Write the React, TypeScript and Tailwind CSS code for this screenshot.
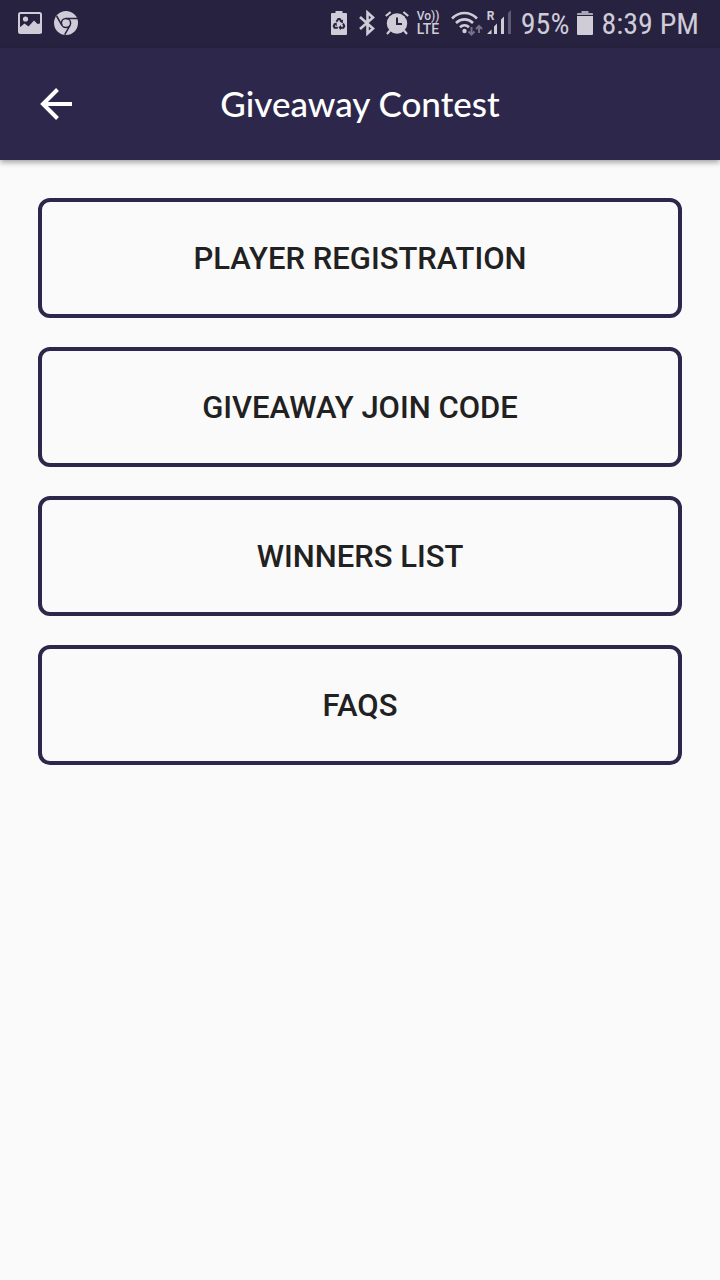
const menuItems = ["Player Registration", "Giveaway Join Code", "Winners List", "FAQs"];

function PictureIcon() {
    return (
        <svg width="24" height="22" viewBox="0 0 24 22" aria-hidden="true">
            <rect x="1" y="1" width="22" height="20" rx="1.5" fill="none" stroke="currentColor" strokeWidth="2" />
            <path d="M1 16l5.500-4.500 4 3 5.500-6 3.500 3.500 4.500-1v10H1z" fill="currentColor" />
            <circle cx="7.5" cy="7" r="2.6" fill="currentColor" />
        </svg>
    );
}

function ChromeIcon() {
    return (
        <svg width="24" height="24" viewBox="0 0 24 24" aria-hidden="true">
            <circle cx="12" cy="12" r="12" fill="currentColor" />
            <g fill="none" stroke="#282241" strokeWidth="1.5">
                <circle cx="12" cy="12" r="4.6" />
                <path d="M12 7.4h11M8 14.3L2.6 5M16 14.3L10.7 23.6" />
            </g>
        </svg>
    );
}

function BatteryRecycleIcon() {
    return (
        <svg width="16" height="24" viewBox="0 0 16 24" aria-hidden="true">
            <path d="M1 2h3.5V0h7v2H15a1 1 0 0 1 1 1v20a1 1 0 0 1-1 1H1a1 1 0 0 1-1-1V3a1 1 0 0 1 1-1z" fill="currentColor" />
            <g fill="none" stroke="#282241" strokeWidth="2">
                <path d="M5.4 10.8L7.3 7.9h1.4l1.6 2.5M12 12.6l1.3 2.4-.9 1.7H9.5M6.8 16.7H3.6L2.7 15l1.4-2.4" />
            </g>
            <path d="M11.9 8.6v3.7l-3.3-1.5zM10 14v5.2l-2.6-2.6zM2.3 13l3.3-1.6.3 3.5z" fill="#282241" />
        </svg>
    );
}

function BluetoothIcon() {
    return (
        <svg width="16" height="26" viewBox="0 0 16 26" fill="none" stroke="currentColor" strokeWidth="2.6" aria-hidden="true">
            <path d="M1 7l13 11.5-5.500 5V2.500l5.500 5L1 19" />
        </svg>
    );
}

function AlarmIcon() {
    return (
        <svg width="24" height="24" viewBox="0 0 24 24" aria-hidden="true">
            <circle cx="12" cy="12.5" r="10.2" fill="currentColor" />
            <g fill="none" stroke="currentColor" strokeWidth="2.2">
                <path d="M.8 5L5.6 1M23.2 5L18.4 1M5 19.5L2 23M19 19.5L22 23" />
            </g>
            <path d="M12 6.5V13h5" fill="none" stroke="#282241" strokeWidth="2" />
        </svg>
    );
}

function WifiIcon() {
    return (
        <svg width="32" height="25" viewBox="0 0 32 25" fill="none" aria-hidden="true">
            <g stroke="currentColor" strokeWidth="2.6">
                <path d="M1 7.5C8.5 .2 18.500.2 26 7.5" />
                <path d="M5 12C10 7.100 17 7.100 22 12" />
                <path d="M9 16.300C11.700 13.700 15.300 13.700 18 16.300" />
            </g>
            <circle cx="13.5" cy="20" r="2.2" fill="currentColor" />
            <g stroke="#777188" strokeWidth="2">
                <path d="M20.500 16v7.500M17.500 20.500l3 3 3-3M28 22v-7M25 18l3-3 3 3" />
            </g>
        </svg>
    );
}

function SignalIcon() {
    return (
        <div className="relative h-[26px] w-6">
            <svg width="24" height="26" viewBox="0 0 24 26" aria-hidden="true">
                <path d="M0 24l4.500-4.500V24zM7 16.500l3-3V24H7zM14 9.500l3-3V24h-3z" fill="currentColor" />
                <path d="M21 3l3-3v24h-3z" fill="#615a75" />
            </svg>
            <span className="absolute top-0 left-0 font-[Roboto,sans-serif] text-[12px] leading-3 font-bold">R</span>
        </div>
    );
}

function BatteryIcon() {
    return (
        <svg width="16" height="24" viewBox="0 0 16 24" aria-hidden="true">
            <path d="M1 2h3.500V0h7v2H15a1 1 0 0 1 1 1v1H0V3a1 1 0 0 1 1-1z" fill="#aaa6b5" />
            <path d="M0 5h16v18a1 1 0 0 1-1 1H1a1 1 0 0 1-1-1z" fill="currentColor" />
        </svg>
    );
}

function StatusBar() {
    return (
        <div className="flex h-12 items-center justify-between bg-[#282241] pr-[21px] pb-0.5 pl-[18px] text-[#cfccd8]">
            <div className="flex items-center gap-3">
                <PictureIcon />
                <ChromeIcon />
            </div>
            <div className="flex items-center gap-2">
                <div className="flex items-center gap-2.5">
                    <div className="flex items-center gap-3">
                        <BatteryRecycleIcon />
                        <BluetoothIcon />
                    </div>
                    <div className="flex items-center gap-2">
                        <AlarmIcon />
                        <div className="flex w-6 flex-col font-medium whitespace-nowrap">
                            <span className="text-[12px] leading-3">Vo))</span>
                            <span className="text-[14px] leading-[14px]">LTE</span>
                        </div>
                    </div>
                    <WifiIcon />
                </div>
                <div className="flex items-center gap-2 font-['Roboto_Condensed',Roboto,sans-serif] text-[30px] leading-9">
                    <div className="-ml-1 pr-0.5">
                        <SignalIcon />
                    </div>
                    <span className="pt-0.5">95%</span>
                    <BatteryIcon />
                    <span className="pt-0.5">8:39 PM</span>
                </div>
            </div>
        </div>
    );
}

export default function App() {
    return (
        <div className="min-h-screen bg-[#fafafa] font-[Roboto,sans-serif]">
            <StatusBar />

            <header className="grid h-28 grid-cols-[80px_1fr_80px] items-center bg-[#2d284b] text-white shadow-[0_2px_6px_rgba(0,0,0,0.4)]">
                <button type="button" aria-label="Back" className="flex h-16 items-center pl-10">
                    <svg width="32" height="32" viewBox="0 0 32 32" fill="none" stroke="currentColor" strokeWidth="4" aria-hidden="true">
                        <path d="M32 16H3M17.500 1.500L3 16l14.500 14.500" />
                    </svg>
                </button>
                <h1 className="pb-0.5 text-center font-[Lato,sans-serif] text-[35px] leading-10 font-medium">Giveaway Contest</h1>
            </header>

            <main className="flex flex-col gap-[29px] px-[38px] py-[38px]">
                {menuItems.map((item) => (
                    <button
                        key={item}
                        type="button"
                        className="h-[120px] w-full rounded-xl border-4 border-[#2d284b] pt-0.5 text-[31px] leading-10 font-medium text-[#212121] uppercase"
                    >
                        {item}
                    </button>
                ))}
            </main>
        </div>
    );
}
